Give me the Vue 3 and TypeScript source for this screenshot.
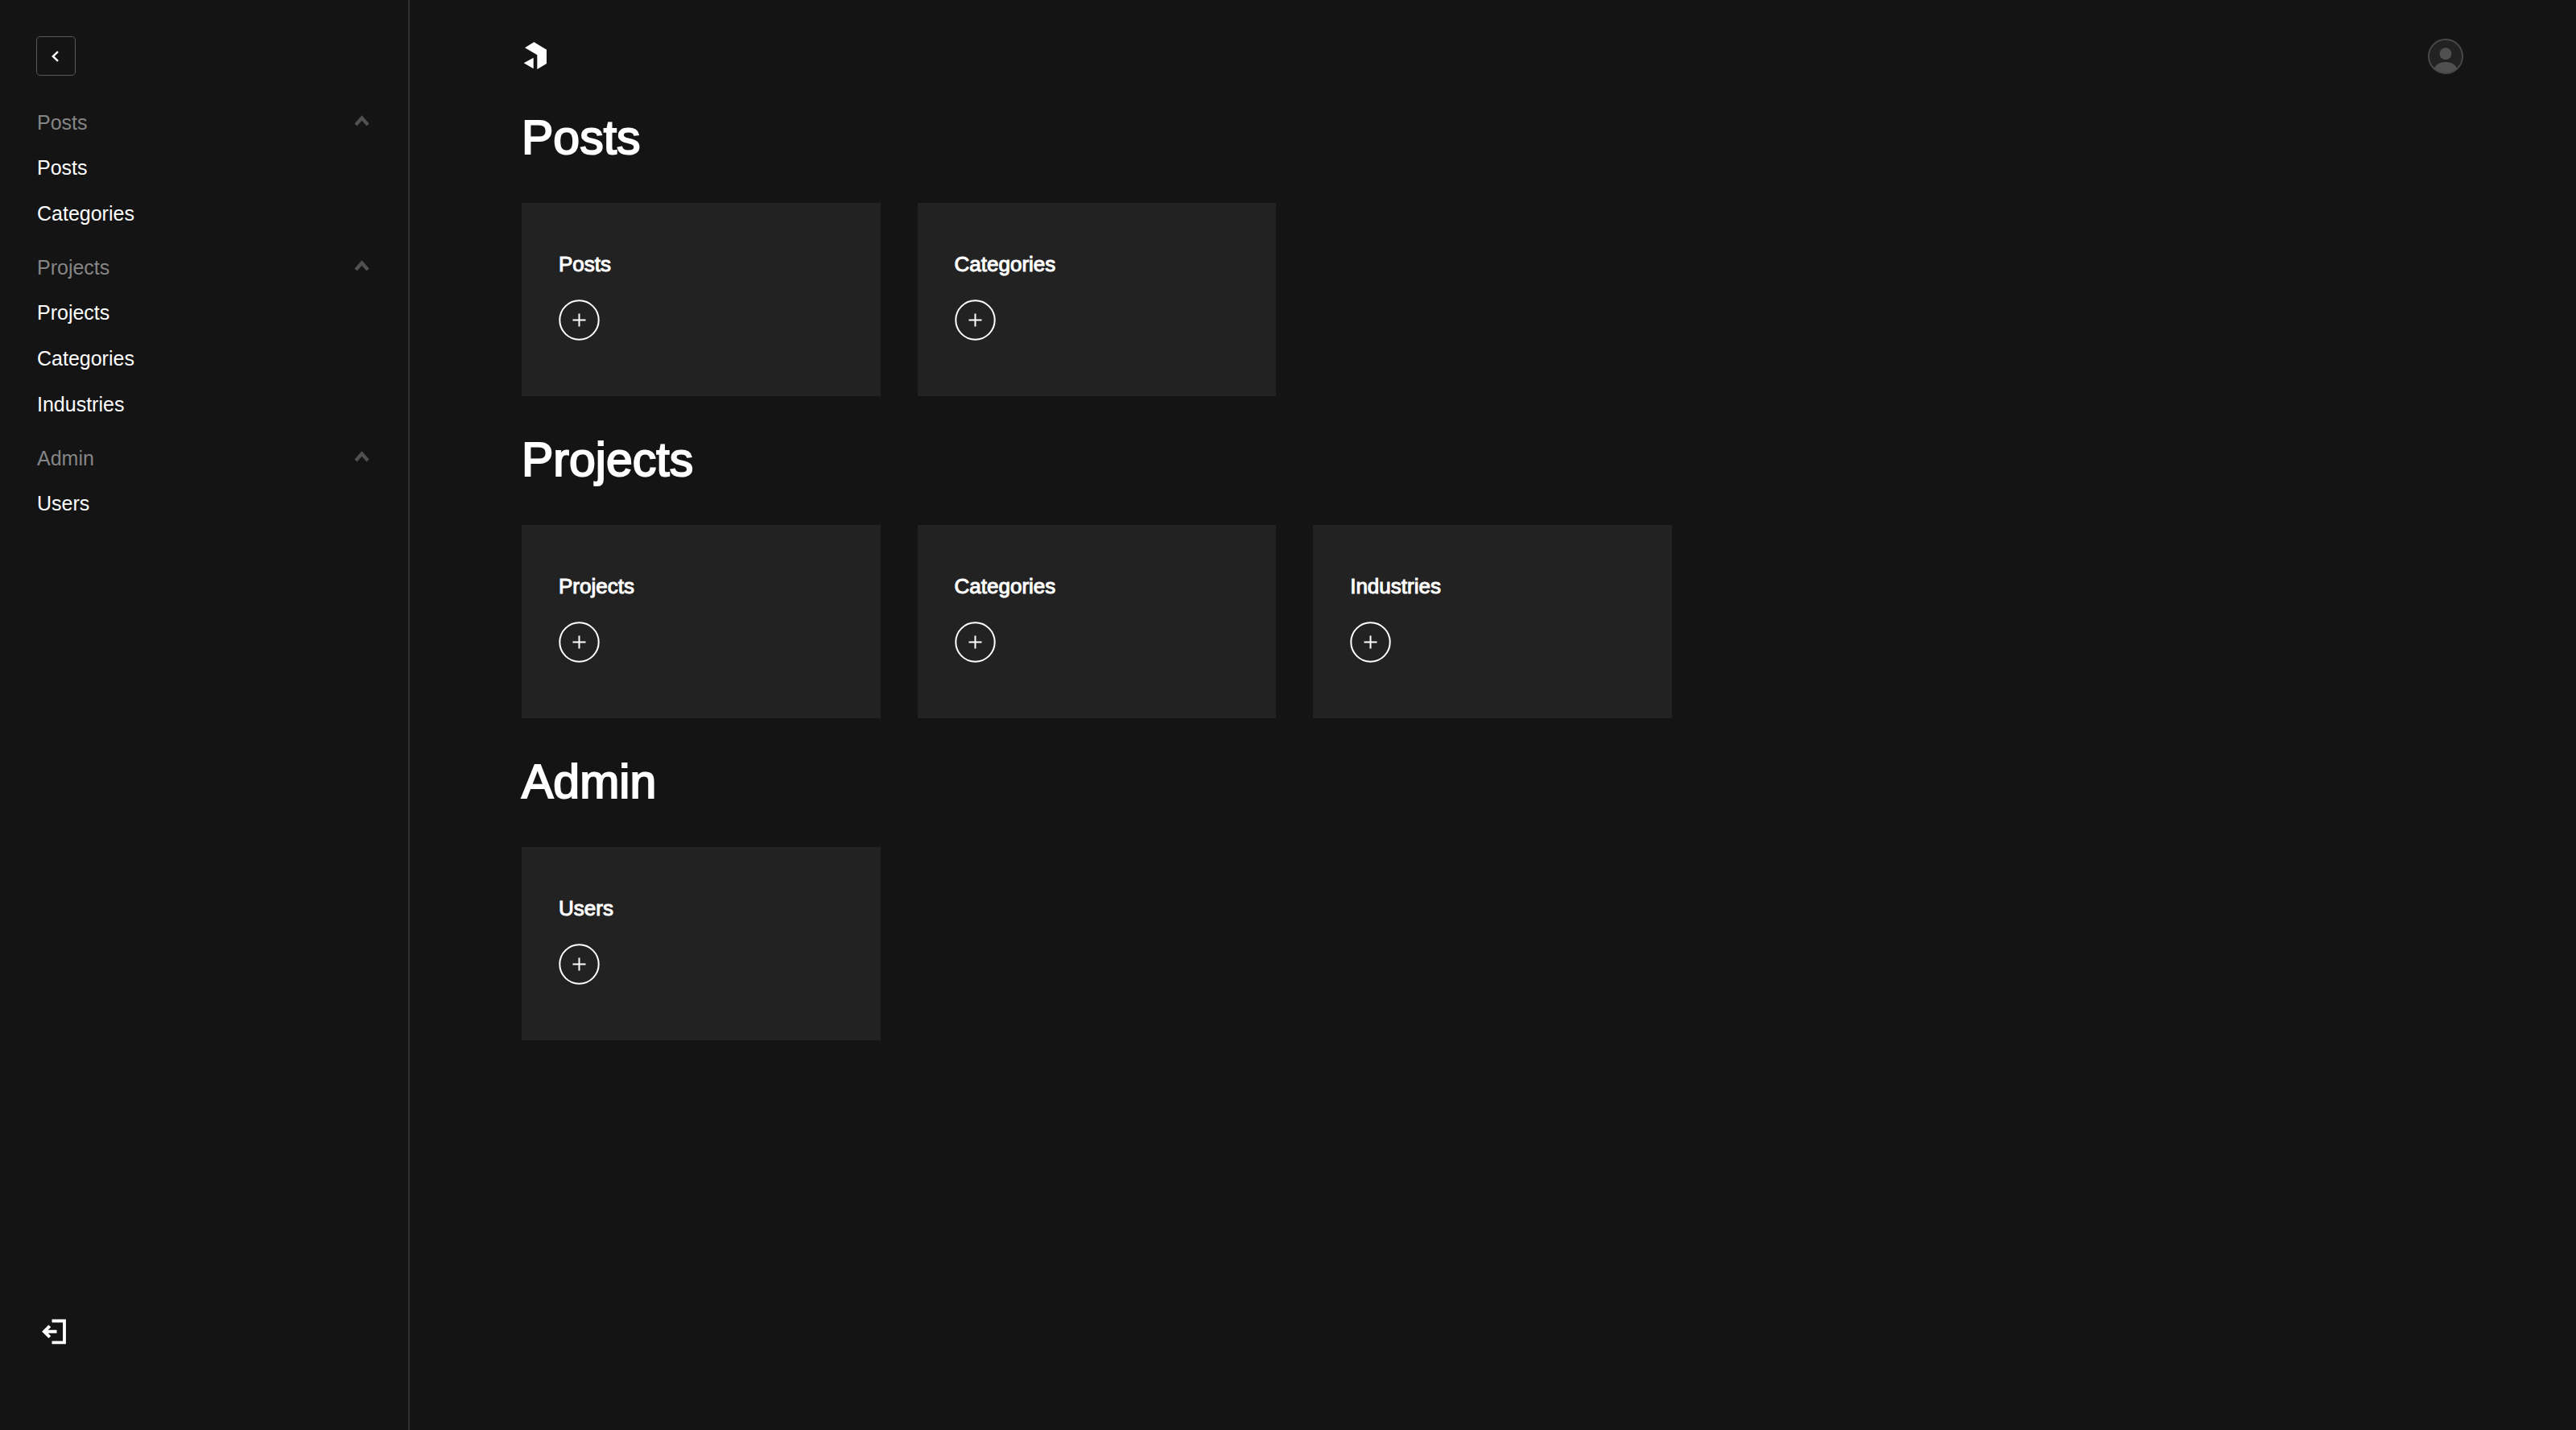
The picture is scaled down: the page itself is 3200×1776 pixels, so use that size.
<script setup lang="ts">
import { ref } from 'vue'

interface Group {
  label: string
  items: string[]
}

const groups: Group[] = [
  { label: 'Posts', items: ['Posts', 'Categories'] },
  { label: 'Projects', items: ['Projects', 'Categories', 'Industries'] },
  { label: 'Admin', items: ['Users'] },
]

const closed = ref<string[]>([])

function toggle(label: string) {
  closed.value = closed.value.includes(label)
    ? closed.value.filter((l) => l !== label)
    : [...closed.value, label]
}
</script>

<template>
  <div class="layout">
    <aside class="sidebar">
      <button class="collapse" type="button" aria-label="Close menu">
        <svg width="20" height="20" viewBox="0 0 20 20" fill="none" aria-hidden="true">
          <path d="M12 4.2 5.8 10l6.2 5.8" stroke="#fff" stroke-width="2.4" />
        </svg>
      </button>

      <nav class="nav">
        <div v-for="group in groups" :key="group.label" class="group">
          <button
            class="group-toggle"
            type="button"
            :aria-expanded="!closed.includes(group.label)"
            @click="toggle(group.label)"
          >
            <span>{{ group.label }}</span>
            <svg width="25" height="25" viewBox="0 0 25 25" fill="none" aria-hidden="true">
              <path d="M5 15 12.5 6.5 20 15" stroke="#505050" stroke-width="4.2" />
            </svg>
          </button>
          <ul v-if="!closed.includes(group.label)" class="links">
            <li v-for="item in group.items" :key="item">
              <a href="#">{{ item }}</a>
            </li>
          </ul>
        </div>
      </nav>

      <a class="logout" href="#" aria-label="Log out">
        <svg width="40" height="40" viewBox="0 0 40 40" fill="none" aria-hidden="true">
          <path d="M18.5 6.5H34v26.8H18.5" stroke="#fff" stroke-width="3.8" />
          <path d="M24.5 19.7H10M15.8 12.8 8.9 19.7l6.9 6.9" stroke="#fff" stroke-width="4" />
        </svg>
      </a>
    </aside>

    <main class="main">
      <header class="header">
        <a class="logo" href="#" aria-label="Dashboard">
          <svg width="44" height="44" viewBox="0 0 132 132" aria-hidden="true">
            <path d="M12 34 46 13 93 41V93L58 114V61Z" fill="#fff" />
            <path d="M8 91 44 71V112Z" fill="#fff" />
          </svg>
        </a>
        <a class="account" href="#" aria-label="Account">
          <svg width="44" height="44" viewBox="0 0 44 44" aria-hidden="true">
            <clipPath id="account-clip"><circle cx="22" cy="22" r="21.5" /></clipPath>
            <circle cx="22" cy="22" r="21" fill="#222" />
            <g clip-path="url(#account-clip)" fill="#505050">
              <circle cx="22" cy="18.7" r="7.4" />
              <ellipse cx="22" cy="40" rx="14.8" ry="11" />
            </g>
            <circle cx="22" cy="22" r="21" fill="none" stroke="#484848" stroke-width="2" />
          </svg>
        </a>
      </header>

      <section v-for="group in groups" :key="group.label">
        <h2 class="heading">{{ group.label }}</h2>
        <ul class="cards">
          <li v-for="item in group.items" :key="item" class="card">
            <h3 class="card-title">{{ item }}</h3>
            <button class="add" type="button" :aria-label="`Create new in ${item}`">
              <svg width="51" height="51" viewBox="0 0 51 51" fill="none" stroke="#fff" aria-hidden="true">
                <circle cx="25.5" cy="25.5" r="24.2" stroke-width="2" />
                <path d="M25.5 17.5v16M17.5 25.5h16" stroke-width="2" />
              </svg>
            </button>
          </li>
        </ul>
      </section>
    </main>
  </div>
</template>

<style>
body {
  margin: 0;
  background: #141414;
}
</style>

<style scoped>
.layout {
  display: flex;
  min-height: 100vh;
  background: #141414;
  color: #fff;
  font-family: 'Liberation Sans', Arial, sans-serif;
  font-size: 25px;
  line-height: 33px;
}

button {
  padding: 0;
  border: 0;
  background: none;
  color: inherit;
  font: inherit;
  cursor: pointer;
}

a {
  color: inherit;
  text-decoration: none;
}

ul {
  margin: 0;
  padding: 0;
  list-style: none;
}

svg {
  display: block;
}

.sidebar {
  box-sizing: border-box;
  display: flex;
  flex: none;
  flex-direction: column;
  width: 509px;
  padding: 45px 45px 102px 46px;
  border-right: 2px solid #303030;
}

.collapse {
  box-sizing: border-box;
  display: flex;
  align-items: center;
  justify-content: center;
  width: 49px;
  height: 49px;
  margin-left: -1px;
  border: 1px solid #585858;
  border-radius: 5px;
}

.nav {
  display: flex;
  flex: 1;
  flex-direction: column;
  gap: 34px;
  margin-top: 42px;
}

.group-toggle {
  display: flex;
  align-items: center;
  justify-content: space-between;
  width: 100%;
  color: #858585;
  text-align: left;
}

.links {
  display: flex;
  flex-direction: column;
  gap: 24px;
  margin-top: 23px;
}

.links a {
  display: block;
}

.logout {
  align-self: flex-start;
}

.main {
  flex: 1;
  min-width: 0;
  padding: 48px 140px 48px 139px;
}

.header {
  display: flex;
  align-items: center;
  justify-content: space-between;
}

.heading {
  margin: 0;
  padding: 47px 0 49px;
  font-size: 59px;
  font-weight: 400;
  line-height: 64px;
  -webkit-text-stroke: 2px currentColor;
}

.cards {
  display: grid;
  grid-template-columns: repeat(5, minmax(0, 1fr));
  gap: 46px;
}

.card {
  padding: 60px 46px 69px;
  background: #222;
}

.card-title {
  margin: 0 0 28px;
  font-size: 26px;
  font-weight: 400;
  line-height: 32px;
  -webkit-text-stroke: 1px currentColor;
}

.add {
  display: block;
  border-radius: 50%;
}
</style>
